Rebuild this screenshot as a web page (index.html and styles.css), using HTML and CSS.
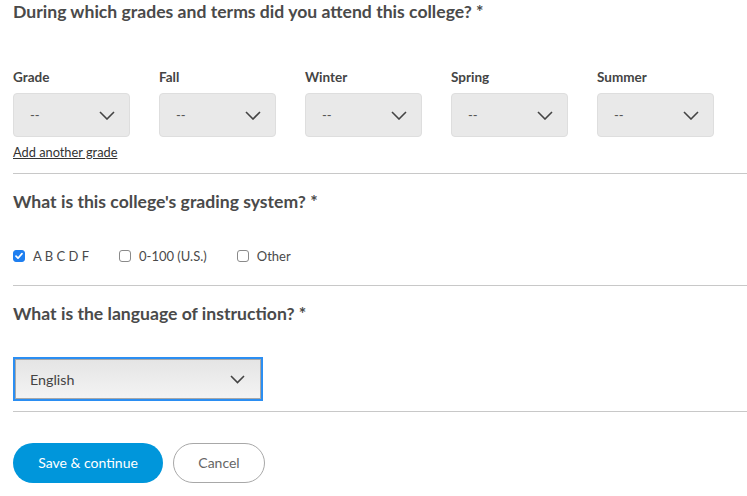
FILE: index.html
```html
<!DOCTYPE html>
<html lang="en">
<head>
<meta charset="utf-8">
<title>College attendance</title>
<link rel="stylesheet" href="styles.css">
</head>
<body>
<main class="form">
  <section class="block">
    <h2 class="q q-first">During which grades and terms did you attend this college? *</h2>
    <div class="terms">
      <div class="field">
        <div class="label">Grade</div>
        <div class="select"><span>--</span><svg class="caret" width="16" height="9" viewBox="0 0 16 9"><path d="M1 1l7 7 7-7" fill="none" stroke="#444" stroke-width="1.6"/></svg></div>
      </div>
      <div class="field">
        <div class="label">Fall</div>
        <div class="select"><span>--</span><svg class="caret" width="16" height="9" viewBox="0 0 16 9"><path d="M1 1l7 7 7-7" fill="none" stroke="#444" stroke-width="1.6"/></svg></div>
      </div>
      <div class="field">
        <div class="label">Winter</div>
        <div class="select"><span>--</span><svg class="caret" width="16" height="9" viewBox="0 0 16 9"><path d="M1 1l7 7 7-7" fill="none" stroke="#444" stroke-width="1.6"/></svg></div>
      </div>
      <div class="field">
        <div class="label">Spring</div>
        <div class="select"><span>--</span><svg class="caret" width="16" height="9" viewBox="0 0 16 9"><path d="M1 1l7 7 7-7" fill="none" stroke="#444" stroke-width="1.6"/></svg></div>
      </div>
      <div class="field">
        <div class="label">Summer</div>
        <div class="select"><span>--</span><svg class="caret" width="16" height="9" viewBox="0 0 16 9"><path d="M1 1l7 7 7-7" fill="none" stroke="#444" stroke-width="1.6"/></svg></div>
      </div>
    </div>
    <a class="add-link" href="#">Add another grade</a>
  </section>
  <hr class="divider divider-1">
  <section class="block">
    <h2 class="q">What is this college's grading system? *</h2>
    <div class="checks">
      <label class="check"><span class="box checked"><svg width="12" height="12" viewBox="0 0 12 12"><path d="M3 6.2l2 2 4-4.6" fill="none" stroke="#fff" stroke-width="1.7" stroke-linecap="round" stroke-linejoin="round"/></svg></span><span class="check-text">A B C D F</span></label>
      <label class="check"><span class="box"></span><span class="check-text">0-100 (U.S.)</span></label>
      <label class="check"><span class="box"></span><span class="check-text">Other</span></label>
    </div>
  </section>
  <hr class="divider divider-2">
  <section class="block">
    <h2 class="q">What is the language of instruction? *</h2>
    <div class="lang-select"><span>English</span><svg class="caret" width="15" height="9" viewBox="0 0 15 9"><path d="M1 1l6.5 6.5 6.5-6.5" fill="none" stroke="#444" stroke-width="1.6"/></svg></div>
  </section>
  <hr class="divider divider-3">
  <div class="actions">
    <button class="btn btn-primary" type="button">Save &amp; continue</button>
    <button class="btn btn-secondary" type="button">Cancel</button>
  </div>
</main>
</body>
</html>
```

FILE: styles.css
```css
html, body {
  margin: 0;
  padding: 0;
  background: #fff;
}
body {
  font-family: Lato, "Liberation Sans", sans-serif;
  color: #4a4a4a;
  width: 747px;
  overflow: hidden;
}
.form {
  padding-left: 13px;
}
.q {
  margin: 0;
  font-size: 17.6px;
  line-height: 24px;
  font-weight: 700;
  color: #4a4a4a;
}
.terms {
  display: flex;
  gap: 29px;
  margin-top: 45px;
}
.field {
  width: 117px;
}
.label {
  font-size: 13.5px;
  line-height: 16px;
  font-weight: 700;
  color: #444;
  margin-bottom: 8px;
}
.select {
  box-sizing: border-box;
  height: 44px;
  background: #e9e9e9;
  border: 1px solid #dedede;
  border-radius: 4px;
  display: flex;
  align-items: center;
  justify-content: space-between;
  padding: 0 14px 0 16px;
  font-size: 13px;
  color: #555;
}
.add-link {
  display: inline-block;
  margin-top: 7px;
  font-size: 12.8px;
  line-height: 16px;
  color: #333;
  text-decoration: underline;
}
.divider {
  border: 0;
  border-top: 1px solid #c8c8c8;
  margin: 0;
}
.divider-1 { margin-top: 13px; }
.divider-1 + .block,
.divider-2 + .block { padding-top: 16px; }
.checks {
  display: flex;
  align-items: center;
  gap: 30px;
  margin-top: 32px;
  height: 20px;
}
.check {
  display: flex;
  align-items: center;
  gap: 8px;
  font-size: 13px;
  color: #4a4a4a;
}
.box {
  box-sizing: border-box;
  width: 12px;
  height: 12px;
  border: 1px solid #8a8a8a;
  border-radius: 3px;
  background: #fff;
  display: flex;
}
.box.checked {
  background: #1f7ff0;
  border-color: #1f7ff0;
}
.box.checked svg {
  margin: -1px;
}
.divider-2 { margin-top: 19px; }
.lang-select {
  box-sizing: border-box;
  margin-top: 31px;
  width: 250px;
  height: 44px;
  border: 2px solid #2b8ef2;
  box-shadow: inset 0 0 0 1px #a8a8a8;
  background: linear-gradient(#e4e4e4, #f4f4f4);
  display: flex;
  align-items: center;
  justify-content: space-between;
  padding: 0 16px 0 15px;
  font-size: 14.3px;
  color: #444;
}
.divider-3 { margin-top: 10px; }
.actions {
  display: flex;
  gap: 10px;
  margin-top: 31px;
}
.btn {
  box-sizing: border-box;
  height: 40px;
  border-radius: 20px;
  font-family: Lato, "Liberation Sans", sans-serif;
  font-size: 14px;
  cursor: pointer;
  padding: 0 0 1px;
}
.btn-primary {
  width: 150px;
  background: #0096db;
  border: 0;
  color: #fff;
}
.btn-secondary {
  width: 92px;
  background: #fff;
  border: 1px solid #a8a8a8;
  color: #666;
}
```
